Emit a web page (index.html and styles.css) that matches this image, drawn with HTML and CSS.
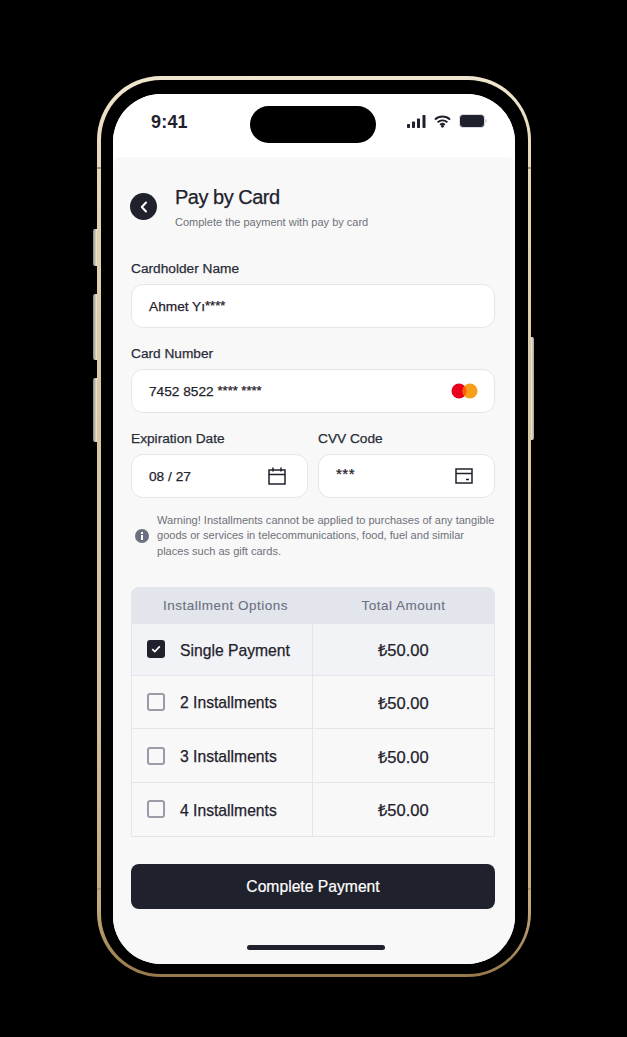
FILE: index.html
```html
<!DOCTYPE html>
<html lang="en">
<head>
<meta charset="utf-8">
<title>Pay by Card</title>
<link rel="stylesheet" href="styles.css">
</head>
<body>
<div class="phone">
  <span class="side side-l1"></span>
  <span class="side side-l2"></span>
  <span class="side side-l3"></span>
  <span class="side side-r"></span>
  <span class="tick tick-tl"></span>
  <span class="tick tick-tr"></span>
  <span class="tick tick-bl"></span>
  <span class="tick tick-br"></span>
  <div class="bezel">
    <div class="screen">
      <div class="status">
        <span class="time">9:41</span>
        <span class="island"></span>
        <div class="status-icons">
          <svg width="19" height="13" viewBox="0 0 19 13"><rect x="0" y="9" width="3" height="4" rx=".8"/><rect x="5" y="6.500" width="3" height="6.500" rx=".8"/><rect x="10" y="3.500" width="3" height="9.500" rx=".8"/><rect x="15.500" y="0" width="3" height="13" rx=".8"/></svg>
          <svg width="17" height="13" viewBox="0 0 18 13"><path d="M1 4.500a11.500 11.500 0 0 1 16 0M3.800 7.400a7.500 7.500 0 0 1 10.400 0M6.500 10a3.600 3.600 0 0 1 5 0" fill="none" stroke="#1f222c" stroke-width="2"/><circle cx="9" cy="11.500" r="1.500"/></svg>
          <svg width="28" height="14" viewBox="0 0 28 14"><rect x=".5" y=".5" width="25" height="13" rx="3.500" fill="#1f222c" stroke="#d9dbe0"/><path d="M26.500 5v4c.8-.3 1.200-1 1.200-2s-.4-1.700-1.200-2z" fill="#b9bcc4"/></svg>
        </div>
      </div>
      <main class="content">
        <header class="head">
          <span class="back"><svg width="10" height="12" viewBox="0 0 10 12"><path d="M7 1.500 2.800 6 7 10.500" fill="none" stroke="#fff" stroke-width="2" stroke-linecap="round" stroke-linejoin="round"/></svg></span>
          <div>
            <h1>Pay by Card</h1>
            <p class="sub">Complete the payment with pay by card</p>
          </div>
        </header>
        <label class="lbl first">Cardholder Name</label>
        <div class="field"><span>Ahmet Yı<span class="stars">****</span></span></div>
        <label class="lbl">Card Number</label>
        <div class="field"><span>7452 8522 <span class="stars">**** ****</span></span>
          <svg class="mc" width="27" height="16" viewBox="0 0 27 16"><circle cx="8" cy="8" r="7.500" fill="#e8001c"/><circle cx="19" cy="8" r="7.500" fill="#f79e1b"/><path d="M13.500 2.800a7.500 7.500 0 0 1 0 10.400 7.500 7.500 0 0 1 0-10.400z" fill="#ff5f00"/></svg>
        </div>
        <div class="two">
          <div>
            <label class="lbl">Expiration Date</label>
            <div class="field icon-field"><span>08 / 27</span>
              <svg width="18" height="18" viewBox="0 0 18 18" fill="none" stroke="#1f222c" stroke-width="1.500"><rect x="1" y="3" width="16" height="14"/><path d="M1 7.500h16M5 .5v4M13 .5v4"/></svg>
            </div>
          </div>
          <div>
            <label class="lbl">CVV Code</label>
            <div class="field icon-field"><span class="cvv">***</span>
              <svg width="18" height="16" viewBox="0 0 18 16" fill="none" stroke="#1f222c" stroke-width="1.500"><rect x="1" y="1" width="16" height="14"/><path d="M1 5.500h16M11 11.500h3"/></svg>
            </div>
          </div>
        </div>
        <div class="warn">
          <svg width="14" height="14" viewBox="0 0 14 14"><circle cx="7" cy="7" r="7" fill="#6b7080"/><rect x="6" y="6" width="2" height="5" fill="#fff"/><rect x="6" y="3" width="2" height="2" fill="#fff"/></svg>
          <p>Warning! Installments cannot be applied to purchases of any tangible goods or services in telecommunications, food, fuel and similar places such as gift cards.</p>
        </div>
        <div class="table">
          <div class="thead"><span class="th-opt">Installment Options</span><span>Total Amount</span></div>
          <div class="row sel r1">
            <div class="opt"><span class="check on"><svg width="10" height="8" viewBox="0 0 10 8"><path d="M1.200 4.200 3.800 6.600 8.800 1.400" fill="none" stroke="#fff" stroke-width="1.700"/></svg></span><span class="opt-text">Single Payment</span></div>
            <div class="amt">₺50.00</div>
          </div>
          <div class="row">
            <div class="opt"><span class="check"></span><span class="opt-text">2 Installments</span></div>
            <div class="amt">₺50.00</div>
          </div>
          <div class="row">
            <div class="opt"><span class="check"></span><span class="opt-text">3 Installments</span></div>
            <div class="amt">₺50.00</div>
          </div>
          <div class="row">
            <div class="opt"><span class="check"></span><span class="opt-text">4 Installments</span></div>
            <div class="amt">₺50.00</div>
          </div>
        </div>
        <button class="pay">Complete Payment</button>
        <span class="home"></span>
      </main>
    </div>
  </div>
</div>
</body>
</html>
```
FILE: styles.css
```css
* { box-sizing: border-box; }
html, body { margin: 0; height: 100%; background: #000; overflow: hidden; }
body {
  font-family: "Liberation Sans", Arial, sans-serif;
  color: #1f222c;
  -webkit-text-stroke: .25px currentColor;
}

.phone {
  position: relative;
  width: 434px;
  height: 901px;
  margin: 76px 0 0 97px;
  padding: 3.500px;
  border-radius: 64px;
  background: linear-gradient(180deg, #f0e6cf 0%, #e4d5b3 12%, #dac9a4 35%, #d4c198 70%, #c4a97a 92%, #96784a 100%);
}
.side { position: absolute; width: 4px; left: -4px; background: linear-gradient(90deg, #8e8a80, #efece4); border-radius: 2px 0 0 2px; }
.side-l1 { top: 153px; height: 37px; }
.side-l2 { top: 218px; height: 66px; }
.side-l3 { top: 302px; height: 64px; }
.side-r { left: auto; right: -3px; width: 3px; top: 261px; height: 103px; border-radius: 0 2px 2px 0; background: linear-gradient(90deg, #efece4, #a5a197); }

.tick { position: absolute; width: 4px; height: 2px; background: #a8946f; }
.tick-tl { left: 0; top: 91px; }
.tick-tr { right: 0; top: 91px; }
.tick-bl { left: 0; top: 812px; }
.tick-br { right: 0; top: 812px; }

.bezel {
  height: 100%;
  padding: 14.500px 13px 9.500px 12.500px;
  background: #000;
  border-radius: 60px;
  position: relative;
}
.screen {
  height: 100%;
  background: #fff;
  border-radius: 48px;
  overflow: hidden;
  display: flex;
  flex-direction: column;
}
.status {
  height: 63px;
  flex: none;
  display: flex;
  align-items: flex-start;
  padding: 17px 27px 0 38px;
  background: #fff;
}
.time { font-size: 18px; font-weight: 700; line-height: 22px; width: 99px; letter-spacing: .2px; -webkit-text-stroke: 0; }
.island { width: 126px; height: 37px; margin-top: -5px; border-radius: 19px; background: #000; }
.status-icons { display: flex; gap: 8px; align-items: center; margin-left: 31px; height: 20px; fill: #1f222c; }

.content {
  position: relative;
  flex: 1;
  background: #f8f8f9;
  border-radius: 8px 8px 0 0;
  padding: 28px 19.500px 0 18px;
}
.head { display: flex; align-items: flex-start; gap: 18px; height: 46px; margin-left: -1px; }
.back {
  width: 27px; height: 27px; margin-top: 8px;
  border-radius: 50%;
  background: #1f222c;
  display: flex; align-items: center; justify-content: center;
}
h1 { margin: 0; font-size: 20px; font-weight: 400; line-height: 24px; letter-spacing: -.5px; }
.sub { margin: 6px 0 0; font-size: 11px; line-height: 14px; color: #6f7178; -webkit-text-stroke: 0; }

.lbl { display: block; font-size: 13.700px; line-height: 16px; margin: 18px 0 7px; color: #2a2d37; }
.lbl.first { margin-top: 30px; }
.field {
  height: 44px;
  padding: 0 16px 0 17px;
  display: flex; align-items: center; justify-content: space-between;
  background: #fff;
  border: 1px solid #e4e6ec;
  border-radius: 12px;
  font-size: 13.700px;
}
.icon-field { padding-right: 21px; }
.stars { position: relative; top: -1px; font-size: 13px; }
.cvv { position: relative; top: -3px; font-size: 15px; letter-spacing: .5px; }
.two { display: grid; grid-template-columns: 177px 177px; gap: 10px; }
.warn { display: flex; align-items: center; gap: 8px; margin: 14.500px 0 0 4px; }
.warn svg { flex: none; }
.warn p { margin: 0; font-size: 11.050px; line-height: 15.500px; color: #6f7178; -webkit-text-stroke: 0; }

.table { margin-top: 27.500px; }
.thead {
  display: grid; grid-template-columns: 181px 1fr;
  height: 37px;
  align-items: center;
  background: #e2e5ec;
  border-radius: 8px 8px 0 0;
  font-size: 13.500px;
  letter-spacing: .5px;
  color: #6b7080;
  text-align: center;
  -webkit-text-stroke: .1px currentColor;
}
.th-opt { padding-left: 8px; }
.row {
  display: grid; grid-template-columns: 181px 1fr;
  height: 53.800px;
  border: 1px solid #e4e6ec;
  border-top: 0;
  font-size: 15.700px;
}
.row.r1 { height: 52px; }
.sel { background: #f2f3f6; }
.opt { display: flex; align-items: center; gap: 15px; padding-left: 15px; border-right: 1px solid #e4e6ec; }
.opt-text { position: relative; top: 1.500px; }
.amt { display: flex; align-items: center; justify-content: center; font-size: 16.500px; padding-top: 1px; }
.check {
  width: 18px; height: 18px;
  flex: none;
  border: 2px solid #9a9da8;
  border-radius: 3px;
  display: flex; align-items: center; justify-content: center;
}
.check.on { background: #1f222c; border-color: #1f222c; }

.pay {
  display: block;
  width: 100%;
  height: 45px;
  margin-top: 27px;
  padding: 2px 0 0;
  border: 0;
  border-radius: 8px;
  background: #1f222c;
  color: #fff;
  font: 400 15.700px "Liberation Sans", Arial, sans-serif;
  -webkit-text-stroke: .2px #fff;
}
.home {
  position: absolute;
  left: 134px; bottom: 14px;
  width: 138px; height: 5px;
  border-radius: 3px;
  background: #1f222c;
}
```
